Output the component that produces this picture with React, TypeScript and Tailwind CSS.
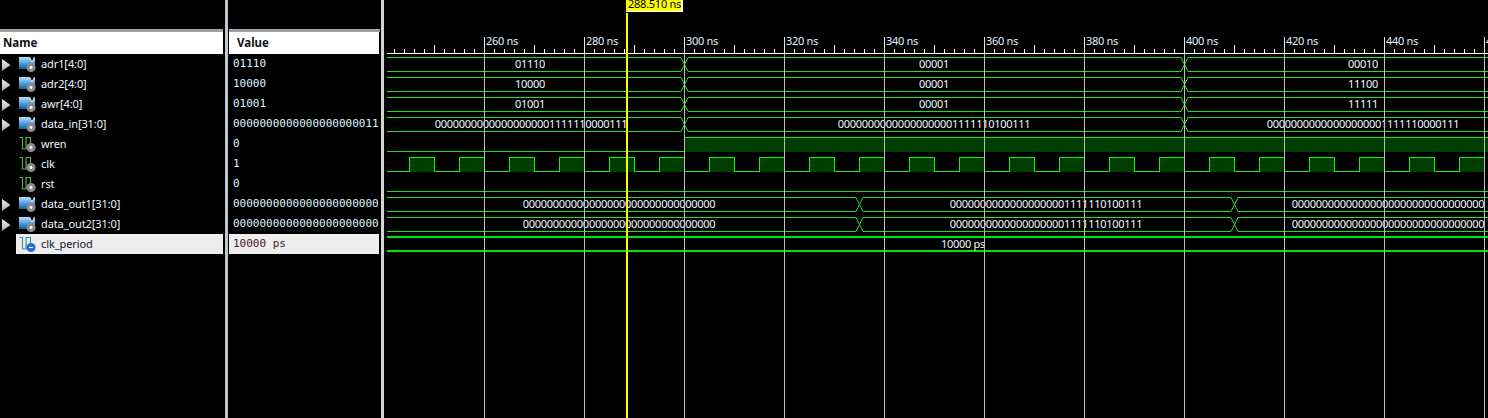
const font = { fontFamily: '"Noto Sans", "Liberation Sans", Arial, sans-serif' }

interface Signal {
  name: string
  value: string
  kind: 'bus' | 'bit' | 'constant'
}

const signals: Signal[] = [
  { name: 'adr1[4:0]', value: '01110', kind: 'bus' },
  { name: 'adr2[4:0]', value: '10000', kind: 'bus' },
  { name: 'awr[4:0]', value: '01001', kind: 'bus' },
  { name: 'data_in[31:0]', value: '0000000000000000000011', kind: 'bus' },
  { name: 'wren', value: '0', kind: 'bit' },
  { name: 'clk', value: '1', kind: 'bit' },
  { name: 'rst', value: '0', kind: 'bit' },
  { name: 'data_out1[31:0]', value: '0000000000000000000000', kind: 'bus' },
  { name: 'data_out2[31:0]', value: '0000000000000000000000', kind: 'bus' },
  { name: 'clk_period', value: '10000 ps', kind: 'constant' },
]

const GREEN = '#22dd22'
const zeros = '00000000000000000000000000000000'

function Gear({ x, y, fill = '#8a8a8a' }: { x: number; y: number; fill?: string }) {
  return (
    <g>
      <circle cx={x} cy={y} r={4.6} fill={fill} />
      <circle cx={x} cy={y} r={1.4} fill="#ffffff" />
    </g>
  )
}

function BusIcon() {
  return (
    <svg width="18" height="16" viewBox="0 0 18 16" className="shrink-0">
      <defs>
        <linearGradient id="busFill" x1="0" y1="0" x2="0" y2="1">
          <stop offset="0" stopColor="#b8e2f8" />
          <stop offset="0.6" stopColor="#3f96dc" />
          <stop offset="1" stopColor="#155f9f" />
        </linearGradient>
      </defs>
      <path d="M0 1h10l3 5 3-5v9H9.5L8 13H0z" fill="url(#busFill)" />
      <path d="M10.5 1l2.5 5 2.5-5" fill="none" stroke="#eaf5fc" strokeWidth="1" />
      <Gear x={12} y={11.5} />
    </svg>
  )
}

function BitIcon({ constant }: { constant?: boolean }) {
  return (
    <svg width="18" height="16" viewBox="0 0 18 16" className="shrink-0">
      <path
        d="M0.5 1.5h3V13H7V1.5h4.5V8"
        fill="none"
        stroke={constant ? '#3f8f9f' : '#5fa84f'}
        strokeWidth="1.2"
      />
      {constant ? (
        <g>
          <circle cx={12} cy={11.5} r={4.6} fill="#2a70c8" />
          <rect x={10} y={11} width={4} height={1} fill="#ffffff" />
        </g>
      ) : (
        <Gear x={12} y={11.5} />
      )}
    </svg>
  )
}

function NameRow({ signal }: { signal: Signal }) {
  const selected = signal.kind === 'constant'
  return (
    <div className="flex h-5 items-center">
      <div className="flex w-4 shrink-0 items-center pt-[2px] pl-[2px]">
        {signal.kind === 'bus' && (
          <svg width="9" height="12" viewBox="0 0 9 12">
            <defs>
              <linearGradient id="arrowFill" x1="0" y1="0" x2="0" y2="1">
                <stop offset="0" stopColor="#f4f4f4" />
                <stop offset="1" stopColor="#a8a8a8" />
              </linearGradient>
            </defs>
            <path d="M0 0l8.5 6L0 12z" fill="url(#arrowFill)" />
          </svg>
        )}
      </div>
      <div
        className={`flex h-5 flex-1 items-center pl-[3px] text-[11px] tracking-[-0.1px] ${
          selected ? 'bg-[#eeeeee] text-[#101828]' : 'text-[#eef6ff]'
        }`}
      >
        {signal.kind === 'bus' ? <BusIcon /> : <BitIcon constant={selected} />}
        <span className="ml-1 whitespace-nowrap">{signal.name}</span>
      </div>
    </div>
  )
}

function ValueRow({ signal }: { signal: Signal }) {
  const selected = signal.kind === 'constant'
  return (
    <div
      className={`flex h-5 items-center overflow-hidden whitespace-pre pt-px pl-1 text-[11px] ${
        selected ? 'bg-[#eeeeee] text-[#4a1030]' : 'text-[#dcf4ff]'
      }`}
      style={{ fontFamily: '"DejaVu Sans Mono", monospace' }}
    >
      {signal.value}
    </div>
  )
}

function Bus({ top, edges }: { top: number; edges: number[] }) {
  const bottom = top + 14
  const xs = [387, ...edges, 1488]
  return (
    <g stroke={GREEN} strokeWidth={1} fill="none">
      {xs.slice(0, -1).map((x, i) => {
        const start = i === 0 ? x : x + 4
        const end = i === xs.length - 2 ? xs[i + 1] : xs[i + 1] - 3
        return (
          <g key={x} shapeRendering="crispEdges">
            <line x1={start} x2={end} y1={top + 0.5} y2={top + 0.5} />
            <line x1={start} x2={end} y1={bottom + 0.5} y2={bottom + 0.5} />
          </g>
        )
      })}
      {edges.map((x) => (
        <path
          key={x}
          d={`M${x - 3} ${top + 0.5}L${x + 4} ${bottom + 0.5}M${x - 3} ${bottom + 0.5}L${x + 4} ${top + 0.5}`}
        />
      ))}
    </g>
  )
}

function Clock() {
  const highs = Array.from({ length: 22 }, (_, i) => 409 + i * 50)
  let d = 'M387 171.5'
  highs.forEach((x) => {
    d += `H${x + 0.5}V157.5H${x + 25.5}V171.5`
  })
  return (
    <g shapeRendering="crispEdges">
      {highs.map((x) => (
        <rect key={x} x={x} y={157} width={25} height={15} fill="#003f00" />
      ))}
      <path d={d} fill="none" stroke="#10f010" strokeWidth={1} />
    </g>
  )
}

function Waveform() {
  const grid = Array.from({ length: 11 }, (_, i) => 484 + i * 100)
  const ticks = Array.from({ length: 110 }, (_, i) => 394 + i * 10)
  const labels = Array.from({ length: 10 }, (_, i) => 260 + i * 20)
  const busText: [number, number, string][] = [
    [68, 530, '01110'],
    [68, 934, '00001'],
    [68, 1363, '00010'],
    [88, 530, '10000'],
    [88, 934, '00001'],
    [88, 1363, '11100'],
    [108, 530, '01001'],
    [108, 934, '00001'],
    [108, 1363, '11111'],
    [128, 531, '0000000000000000000111111' + '0000111'],
    [128, 934, '0000000000000000000111111' + '0100111'],
    [128, 1363, '0000000000000000000111111' + '0000111'],
    [208, 619, zeros],
    [208, 1046, '0000000000000000000111111' + '0100111'],
    [208, 1388, zeros],
    [228, 619, zeros],
    [228, 1046, '0000000000000000000111111' + '0100111'],
    [228, 1388, zeros],
    [248, 963, '10000 ps'],
  ]

  return (
    <svg width="1104" height="418" viewBox="384 0 1104 418" className="block" style={font}>
      {/* ruler */}
      <g shapeRendering="crispEdges">
        <rect x={387} y={53} width={1101} height={1} fill="#ffffff" />
        {ticks.map((x) => {
          const isMajor = (x - 484) % 100 === 0
          const isMid = (x - 434) % 100 === 0
          if (isMajor) return <rect key={x} x={x} y={37} width={1} height={16} fill="#e8e8e8" />
          return <rect key={x} x={x} y={isMid ? 45 : 49} width={1} height={isMid ? 8 : 4} fill="#ffffff" />
        })}
      </g>
      {labels.map((ns, i) => (
        <text key={ns} x={486 + i * 100} y={45} fontSize={11} letterSpacing={-0.3} fill="#e4f0ff">
          {ns} ns
        </text>
      ))}
      <text x={1486} y={45} fontSize={11} fill="#e4f0ff">
        4
      </text>

      {/* waves */}
      {[57, 77, 97, 117].map((top) => (
        <Bus key={top} top={top} edges={[684, 1184]} />
      ))}
      <g shapeRendering="crispEdges">
        <rect x={684} y={137} width={804} height={15} fill="#003f00" />
        <rect x={684} y={137} width={804} height={1} fill={GREEN} />
        <rect x={387} y={151} width={297} height={1} fill={GREEN} />
      </g>
      <Clock />
      <rect x={387} y={191} width={1101} height={1} fill={GREEN} shapeRendering="crispEdges" />
      {[197, 217].map((top) => (
        <Bus key={top} top={top} edges={[859, 1234]} />
      ))}
      <g shapeRendering="crispEdges">
        <rect x={387} y={236} width={1101} height={2} fill="#00e800" />
        <rect x={387} y={250} width={1101} height={2} fill="#00e800" />
      </g>

      {busText.map(([y, x, text]) => (
        <text key={`${y}-${x}`} x={x} y={y} fontSize={11} textAnchor="middle" fill="#f0f6ff" letterSpacing={-0.27}>
          {text}
        </text>
      ))}

      {/* grid lines and cursor */}
      <g shapeRendering="crispEdges">
        {grid.map((x) => (
          <rect key={x} x={x} y={54} width={1} height={364} fill="#bcbcbc" />
        ))}
        <rect x={626} y={13} width={2} height={405} fill="#ffff00" />
        <rect x={626} y={0} width={57} height={12} fill="#ffffff" />
        <rect x={626} y={0} width={55} height={11} fill="#ffff00" />
      </g>
      <text x={628} y={8} fontSize={11} letterSpacing={-0.25} fill="#000000">
        288.510 ns
      </text>
    </svg>
  )
}

export default function App() {
  return (
    <div className="flex h-[418px] w-[1488px] overflow-hidden bg-black" style={font}>
      {/* Name column */}
      <div className="mr-[2px] w-[223px] shrink-0 pt-[29px]">
        <div className="h-[3px] bg-[#a0a0a8]" />
        <div className="flex h-[22px] items-center bg-white pl-[3px] text-[11.5px] font-bold text-[#101010]">Name</div>
        {signals.map((s) => (
          <NameRow key={s.name} signal={s} />
        ))}
      </div>
      <div className="w-[3px] shrink-0 bg-[#c4c4cc]" />

      {/* Value column */}
      <div className="mr-[1px] ml-[1px] w-[151px] shrink-0 pt-[29px]">
        <div className="h-[3px] bg-[#a0a0a8]" />
        <div className="mr-px flex h-[22px] items-center bg-white pl-2 text-[11.5px] font-bold text-[#101010]">Value</div>
        <div className="mr-px">
          {signals.map((s) => (
            <ValueRow key={s.name} signal={s} />
          ))}
        </div>
      </div>
      <div className="w-[3px] shrink-0 bg-[#d4d4d4]" />

      {/* Wave area */}
      <div className="flex-1">
        <Waveform />
      </div>
    </div>
  )
}
